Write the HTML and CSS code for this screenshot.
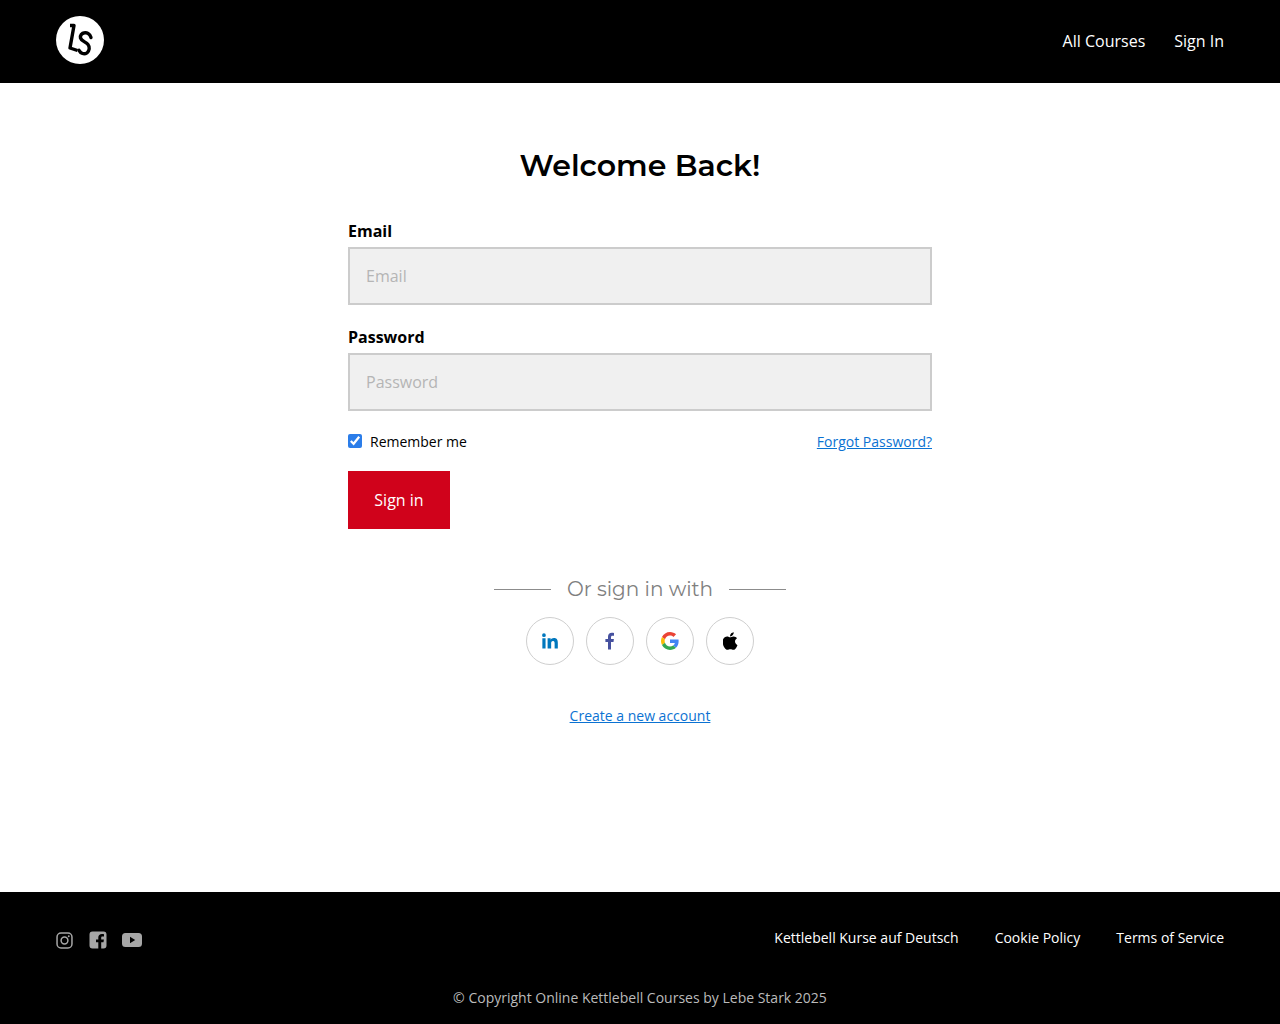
FILE: index.html
```html
<!DOCTYPE html>
<html lang="en">
<head>
<meta charset="utf-8">
<title>Sign in</title>
<link rel="stylesheet" href="styles.css">
</head>
<body>
<header class="site-header">
  <a class="logo" href="#" aria-label="Lebe Stark">
    <svg viewBox="0 0 48 48" width="48" height="48">
      <circle cx="24" cy="24" r="24" fill="#fff"/>
      <path d="M14 9.500 H18 L14 32 L21.500 34.500" fill="none" stroke="#000" stroke-width="3.400" stroke-linejoin="round"/>
      <path d="M35 21.500 C33.800 17.500 30.500 16.500 28.700 16.800 C25.500 17.200 24 19.500 24.500 22 C25.200 25 30 26 32 28.500 C34 31 33.500 35 31 36.800 C28 38.800 24.800 37.500 23 34.300" fill="none" stroke="#000" stroke-width="3.400" stroke-linecap="round"/>
    </svg>
  </a>
  <nav class="top-nav">
    <a href="#">All Courses</a>
    <a href="#">Sign In</a>
  </nav>
</header>

<main class="content">
  <h1 class="title">Welcome Back!</h1>
  <form class="form">
    <label class="label" for="email">Email</label>
    <input class="input" id="email" type="email" placeholder="Email">
    <label class="label label-second" for="password">Password</label>
    <input class="input" id="password" type="password" placeholder="Password">
    <div class="options">
      <label class="remember"><input class="check" type="checkbox" checked> Remember me</label>
      <a class="link" href="#">Forgot Password?</a>
    </div>
    <button class="submit" type="button">Sign in</button>
  </form>

  <div class="divider"><span class="rule"></span><span class="divider-text">Or sign in with</span><span class="rule"></span></div>

  <div class="socials">
    <a class="social" href="#" aria-label="LinkedIn">
      <svg viewBox="0 0 18 18" width="16" height="16"><path fill="#0077bd" d="M.4 6h3.600v11.500H.4zM2.200.4a2.100 2.100 0 1 1 0 4.200 2.100 2.100 0 0 1 0-4.200zM6.300 6h3.400v1.600c.6-1 1.900-1.900 3.700-1.900 3.700 0 4.400 2.400 4.400 5.600v6.200h-3.600v-5.500c0-1.300 0-3-1.800-3s-2.100 1.400-2.100 2.900v5.600H6.300z"/></svg>
    </a>
    <a class="social" href="#" aria-label="Facebook">
      <svg viewBox="0 0 18 18" width="18" height="18"><path fill="#46519f" d="M7 17.500V10H4.400V7H7V4.800C7 2.200 8.500.8 10.900.8c.9 0 1.500.1 2.100.2v2.700h-1.500c-1.200 0-1.500.6-1.500 1.500V7h2.900l-.4 3H10v7.500z"/></svg>
    </a>
    <a class="social" href="#" aria-label="Google">
      <svg viewBox="0 0 48 48" width="18" height="18"><path fill="#EA4335" d="M24 9.500c3.500 0 6.700 1.200 9.200 3.600l6.900-6.900C35.900 2.400 30.500 0 24 0 14.600 0 6.500 5.400 2.600 13.200l8 6.200C12.500 13.600 17.800 9.500 24 9.500z"/><path fill="#4285F4" d="M47 24.500c0-1.600-.1-3.100-.4-4.500H24v9h13c-.6 3-2.300 5.500-4.800 7.200l7.700 6C44.400 38 47 31.800 47 24.500z"/><path fill="#FBBC05" d="M10.500 28.600A14.500 14.500 0 0 1 9.700 24c0-1.600.3-3.100.8-4.600l-8-6.200A24 24 0 0 0 0 24c0 3.900.9 7.500 2.600 10.800z"/><path fill="#34A853" d="M24 48c6.500 0 11.900-2.100 15.900-5.800l-7.700-6c-2.200 1.500-4.900 2.300-8.200 2.300-6.200 0-11.500-4.200-13.400-9.900l-8 6.200C6.500 42.600 14.600 48 24 48z"/></svg>
    </a>
    <a class="social" href="#" aria-label="Apple">
      <svg viewBox="16 28 376 456" width="15" height="18"><path fill="#000" d="M318.700 268.700c-.2-36.700 16.400-64.400 50-84.800-18.800-26.900-47.200-41.700-84.700-44.600-35.500-2.800-74.300 20.700-88.500 20.700-15 0-49.400-19.700-76.400-19.700C63.300 141.200 4 184.800 4 273.500q0 39.300 14.400 81.200c12.800 36.700 59 126.700 107.200 125.200 25.200-.6 43-17.900 75.800-17.900 31.800 0 48.300 17.900 76.400 17.900 48.600-.7 90.400-82.500 102.600-119.300-65.200-30.700-61.700-90-61.700-91.900zm-56.600-164.200c27.300-32.400 24.800-61.900 24-72.500-24.100 1.400-52 16.400-67.900 34.900-17.500 19.800-27.800 44.300-25.600 71.900 26.100 2 49.900-11.400 69.500-34.300z"/></svg>
    </a>
  </div>

  <a class="link create" href="#">Create a new account</a>
</main>

<footer class="site-footer">
  <div class="footer-top">
    <div class="footer-icons">
      <a href="#" aria-label="Instagram">
        <svg viewBox="0 0 18 18" width="17" height="17" fill="none" stroke="#a6a6a6"><rect x="1.100" y="1.100" width="15.800" height="15.800" rx="4.200" stroke-width="1.600"/><circle cx="9" cy="9" r="3.600" stroke-width="1.600"/><circle cx="13.500" cy="4.500" r="1" fill="#a6a6a6" stroke="none"/></svg>
      </a>
      <a href="#" aria-label="Facebook">
        <svg viewBox="0 0 18 18" width="18" height="18"><path fill="#a6a6a6" d="M3.500.5h11a3 3 0 0 1 3 3v11a3 3 0 0 1-3 3h-2.300v-6.200h2.300l.4-2.700h-2.700V6.900c0-.8.300-1.300 1.400-1.300h1.400V3.200c-.4 0-1.200-.2-2.100-.2-2.200 0-3.600 1.300-3.600 3.600v2H7v2.700h2.300v6.200H3.500a3 3 0 0 1-3-3v-11a3 3 0 0 1 3-3z"/></svg>
      </a>
      <a href="#" aria-label="YouTube">
        <svg viewBox="0 0 20 14" width="20" height="14"><path fill="#a6a6a6" fill-rule="evenodd" d="M3.500 0h13A3.500 3.500 0 0 1 20 3.500v7a3.500 3.500 0 0 1-3.500 3.500h-13A3.500 3.500 0 0 1 0 10.500v-7A3.500 3.500 0 0 1 3.500 0zM8 3.700v6.600L13.200 7z"/></svg>
      </a>
    </div>
    <nav class="footer-nav">
      <a href="#">Kettlebell Kurse auf Deutsch</a>
      <a href="#">Cookie Policy</a>
      <a href="#">Terms of Service</a>
    </nav>
  </div>
  <p class="copyright">© Copyright Online Kettlebell Courses by Lebe Stark 2025</p>
</footer>
</body>
</html>
```
FILE: styles.css
```css
* { box-sizing: border-box; }
html, body { margin: 0; padding: 0; }
body {
  font-family: "Open Sans", "Liberation Sans", sans-serif;
  font-size: 16px;
  color: #000;
  background: #fff;
  min-height: 1024px;
  display: flex;
  flex-direction: column;
}
a { text-decoration: none; }

.site-header {
  height: 83px;
  background: #000;
  padding: 16px 56px 0;
  display: flex;
  align-items: flex-start;
  justify-content: space-between;
}
.logo { display: block; width: 48px; height: 48px; }
.logo svg { display: block; }
.top-nav { display: flex; gap: 29px; margin-top: 14px; }
.top-nav a { color: #fff; font-size: 16px; line-height: 22px; }

.content {
  flex: 1;
  width: 584px;
  margin: 0 auto;
  padding-top: 61px;
  display: flex;
  flex-direction: column;
  align-items: center;
}
.title {
  margin: 0;
  font-family: Montserrat, Inter, "Open Sans", sans-serif;
  font-size: 30px;
  font-weight: 600;
  line-height: 44px;
  text-align: center;
}
.form { width: 100%; margin-top: 32px; }
.label { display: block; font-weight: 700; font-size: 16px; line-height: 22px; margin-bottom: 5px; }
.label-second { margin-top: 21px; }
.input {
  display: block;
  width: 100%;
  height: 58px;
  background: #f0f0f0;
  border: 2px solid #ccc;
  border-radius: 0;
  padding: 0 16px;
  font: 16px "Open Sans", sans-serif;
  outline: none;
}
.input::placeholder { color: #b5b5b5; opacity: 1; }
.options {
  display: flex;
  justify-content: space-between;
  align-items: center;
  margin-top: 21px;
  height: 20px;
  font-size: 14px;
}
.remember { display: flex; align-items: center; gap: 8px; line-height: 20px; }
.check { width: 14px; height: 14px; margin: 0 0 2px; accent-color: #2b7de9; }
.link { color: #0b72d2; text-decoration: underline; font-size: 14px; line-height: 20px; }
.submit {
  display: block;
  margin-top: 19px;
  width: 102px;
  height: 58px;
  background: #d0021b;
  color: #fff;
  border: 0;
  border-radius: 0;
  font: 16px "Open Sans", sans-serif;
}

.divider { display: flex; align-items: center; gap: 16px; margin-top: 46px; }
.rule { width: 57px; height: 1px; background: #8c8c8c; }
.divider-text {
  font-family: Montserrat, Inter, "Open Sans", sans-serif;
  font-size: 20px;
  line-height: 28px;
  color: #7f7f7f;
}
.socials { display: flex; gap: 12px; margin-top: 14px; }
.social {
  width: 48px;
  height: 48px;
  border: 1px solid #cfcfcf;
  border-radius: 50%;
  display: flex;
  align-items: center;
  justify-content: center;
}
.create { margin-top: 41px; }

.site-footer {
  height: 132px;
  background: #000;
  padding: 36px 56px 0;
}
.footer-top { display: flex; justify-content: space-between; align-items: flex-start; }
.footer-icons { display: flex; align-items: center; gap: 16px; padding-top: 3px; }
.footer-icons a { height: 18px; display: flex; align-items: center; }
.footer-icons a + a + a { margin-left: -1px; }
.footer-nav { display: flex; gap: 36px; }
.footer-nav a { color: #fff; font-size: 14px; line-height: 20px; }
.copyright {
  margin: 39px 0 0;
  text-align: center;
  color: #bbb;
  font-size: 14px;
  line-height: 20px;
}
```
